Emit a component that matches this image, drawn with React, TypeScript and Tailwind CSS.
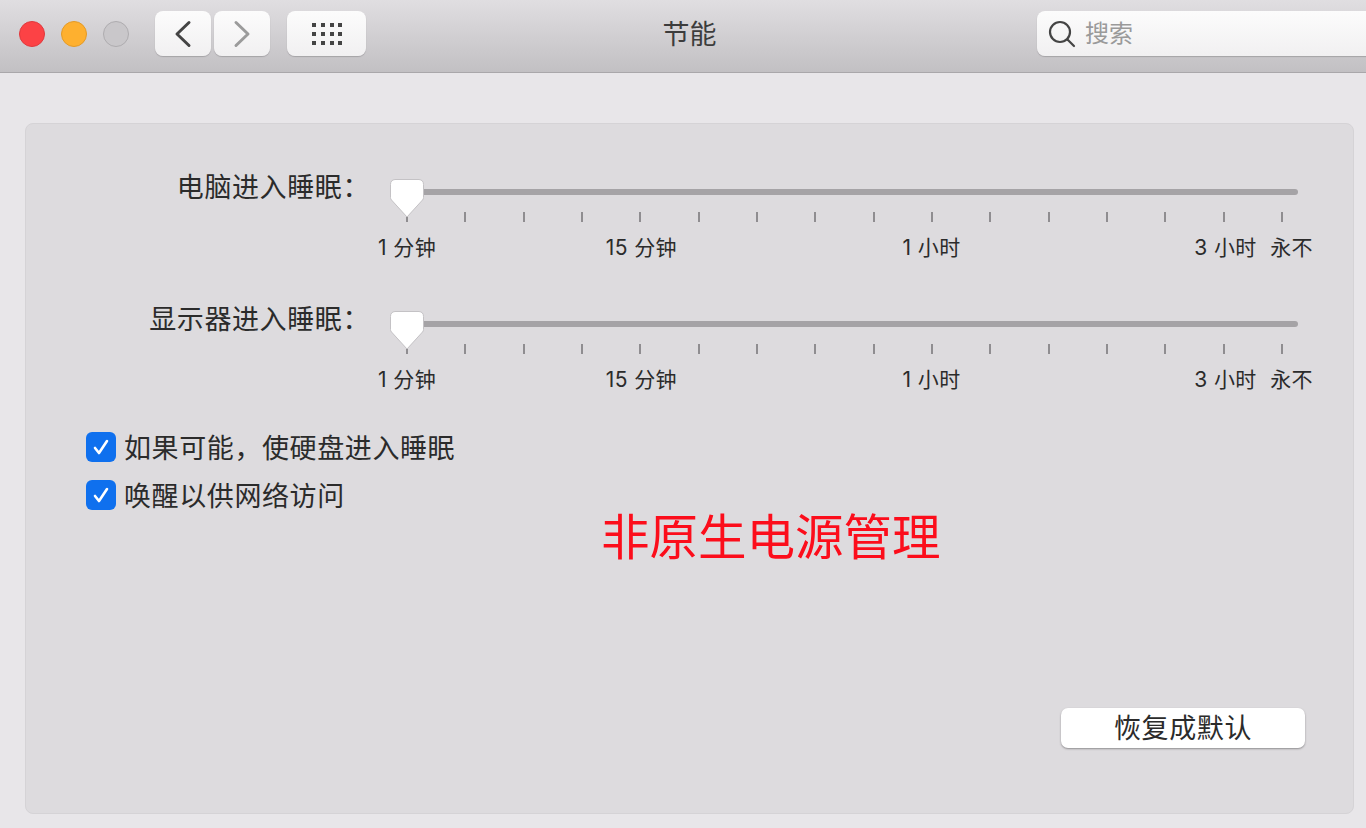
const cjk = "font-['Inter','Noto_Sans_CJK_SC',sans-serif]"

function Slider({ label }: { label: string }) {
  return (
    <div className="flex">
      <div className="-mt-[18px] h-[34px] w-[344px] shrink-0 text-right text-[27px] leading-[34px] tracking-[0.6px] text-[#2b2b2b]">
        {label}
      </div>
      <div className="ml-[8px] w-[935px] shrink-0">
        <div className="relative ml-[29px] h-[6px] w-[891px] rounded-full bg-[#a5a3a6]">
          <svg className="absolute -left-[18px] -top-[10px]" width="36" height="40" viewBox="0 0 36 40">
            <path d="M6 0.500h24a5 5 0 0 1 4.500 5v13a3.500 3.500 0 0 1-1 2.500L18 38 2.500 21a3.500 3.500 0 0 1-1-2.500v-13a5 5 0 0 1 4.500-5z" fill="#fff" stroke="#c4c2c5" strokeWidth="1" />
          </svg>
        </div>
        <div className="ml-[28px] mt-[17px] flex w-[877px] justify-between">
          {Array.from({ length: 16 }).map((_, i) => (
            <div key={i} className="h-[10px] w-[2px] bg-[#8f8d90]" />
          ))}
        </div>
        <div className="mt-[12px] flex whitespace-nowrap text-[21px] leading-[28px] tracking-[0.4px] text-[#2b2b2b]">
          <span className="w-[228px]">1 分钟</span>
          <span className="w-[297px]">15 分钟</span>
          <span className="w-[292px]">1 小时</span>
          <span className="w-[76px]">3 小时</span>
          <span>永不</span>
        </div>
      </div>
    </div>
  )
}

function Check({ label }: { label: string }) {
  return (
    <div className="flex h-[30px] items-center">
      <div className="flex h-[30px] w-[30px] shrink-0 items-center justify-center rounded-[6px] bg-[#0f70ee]">
        <svg width="22" height="22" viewBox="0 0 22 22" fill="none">
          <path d="M5 12l4 5 8-12" stroke="#fff" strokeWidth="2.600" strokeLinecap="round" strokeLinejoin="round" />
        </svg>
      </div>
      <span className="ml-[8px] pt-[3px] text-[27px] leading-[34px] tracking-[0.6px] text-[#2b2b2b]">{label}</span>
    </div>
  )
}

export default function App() {
  return (
    <div className={`h-[828px] w-[1366px] overflow-hidden bg-[#e8e6e9] ${cjk}`}>
      {/* 工具栏 */}
      <div className="flex h-[73px] items-center overflow-hidden border-b border-[#a9a7aa] bg-gradient-to-b from-[#e0dee1] to-[#c2c0c3] pb-[5px] pl-[19px]">
        <div className="flex shrink-0 gap-[16px]">
          <div className="h-[26px] w-[26px] rounded-full border border-[#e0383c] bg-[#fc4245]" />
          <div className="h-[26px] w-[26px] rounded-full border border-[#e49a25] bg-[#feb02f]" />
          <div className="h-[26px] w-[26px] rounded-full border border-[#aeacaf] bg-[#c9c7ca]" />
        </div>
        <div className="ml-[26px] flex shrink-0 gap-[3px]">
          <div className="flex h-[45px] w-[56px] items-center justify-center rounded-[8px] bg-gradient-to-b from-[#fcfcfc] to-[#f1f0f1] shadow-[0_1px_1px_#a5a3a6]">
            <svg width="18" height="28" viewBox="0 0 18 28" fill="none">
              <path d="M15 2.500L3 14l12 11.500" stroke="#444" strokeWidth="3" strokeLinecap="round" strokeLinejoin="round" />
            </svg>
          </div>
          <div className="flex h-[45px] w-[56px] items-center justify-center rounded-[8px] bg-gradient-to-b from-[#fcfcfc] to-[#f1f0f1] shadow-[0_1px_1px_#a5a3a6]">
            <svg width="18" height="28" viewBox="0 0 18 28" fill="none">
              <path d="M3 2.500L15 14 3 25.500" stroke="#9b9b9b" strokeWidth="3" strokeLinecap="round" strokeLinejoin="round" />
            </svg>
          </div>
        </div>
        <div className="ml-[17px] flex h-[45px] w-[79px] shrink-0 items-center justify-center rounded-[8px] bg-gradient-to-b from-[#fcfcfc] to-[#f1f0f1] shadow-[0_1px_1px_#a5a3a6]">
          <svg width="30" height="22" viewBox="0 0 30 22" fill="#444">
            {[0, 9, 18].map((y) =>
              [0, 9, 18, 26].map((x) => <rect key={`${x}-${y}`} x={x} y={y} width="4" height="4" />),
            )}
          </svg>
        </div>
        <div className="w-[671px] shrink-0 pr-[24px] pt-[2px] text-center text-[27px] leading-[36px] text-[#3c3c3c]">节能</div>
        <div className="flex h-[45px] w-[340px] shrink-0 items-center rounded-[8px] bg-gradient-to-b from-[#fcfcfc] to-[#f1f0f1] pl-[11px] shadow-[0_1px_1px_#a5a3a6]">
          <svg width="28" height="28" viewBox="0 0 28 28" fill="none" stroke="#444" strokeWidth="2.200">
            <circle cx="12" cy="12" r="10" />
            <path d="M19.500 19.500L26 26" strokeLinecap="round" />
          </svg>
          <span className="ml-[9px] text-[24px] leading-[32px] text-[#9a9a9a]">搜索</span>
        </div>
      </div>

      <div className="pl-[25px] pr-[12px] pt-[50px]">
        {/* 设置面板 */}
        <div className="relative flex h-[691px] flex-col rounded-[8px] border border-[#d5d3d6] bg-[#dddbde]">
          <div className="pt-[65px]">
            <Slider label="电脑进入睡眠：" />
          </div>
          <div className="mt-[59px]">
            <Slider label="显示器进入睡眠：" />
          </div>
          <div className="ml-[60px] mt-[38px] flex flex-col gap-[18px]">
            <Check label="如果可能，使硬盘进入睡眠" />
            <Check label="唤醒以供网络访问" />
          </div>
          <div className="absolute left-[575px] top-[385px] text-[48.500px] leading-[58px] text-[#fc0d1b]">非原生电源管理</div>
          <div className="mb-[65px] mr-[48px] mt-auto flex h-[40px] w-[244px] items-center justify-center self-end rounded-[7px] bg-white pt-[3px] text-[27px] tracking-[0.6px] text-[#2b2b2b] shadow-[0_1px_2px_#8f8d90]">
            恢复成默认
          </div>
        </div>
      </div>
    </div>
  )
}
